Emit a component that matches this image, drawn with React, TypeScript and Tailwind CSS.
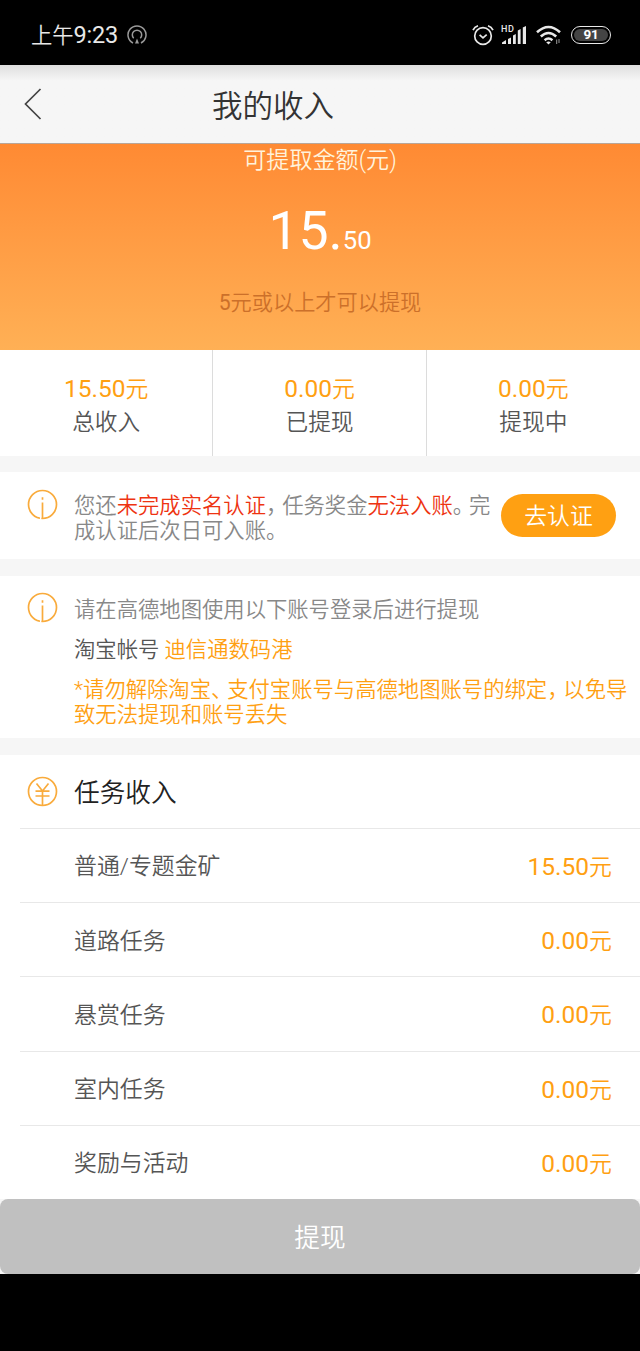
import type { ReactNode } from "react";

const stats = [
  { label: "总收入", value: "15.50" },
  { label: "已提现", value: "0.00" },
  { label: "提现中", value: "0.00" },
];

const incomes = [
  { label: "普通/专题金矿", value: "15.50" },
  { label: "道路任务", value: "0.00" },
  { label: "悬赏任务", value: "0.00" },
  { label: "室内任务", value: "0.00" },
  { label: "奖励与活动", value: "0.00" },
];

export default function App() {
  return (
    <div className="w-[640px] h-[1351px] bg-black flex flex-col overflow-hidden font-[Roboto,'Noto_Sans_CJK_SC',sans-serif] font-[350]">
      <StatusBar />
      <main className="h-[1209px] bg-[#f6f6f6] flex flex-col shrink-0">
        <header className="h-[79px] shrink-0 flex items-center border-b border-[#b9a698] bg-linear-to-b from-[#dedede] via-[#f6f6f6] via-20% to-[#f6f6f6]">
          <button type="button" className="w-[212px] pl-6">
            <svg width="18" height="32" viewBox="0 0 18 32" fill="none" stroke="#444" strokeWidth="1.7">
              <path d="M16.5 1 1.5 16l15 15" />
            </svg>
          </button>
          <h1 className="pt-1.5 text-[30.5px] leading-10 text-[#333] whitespace-nowrap">我的收入</h1>
        </header>

        <Balance />

        <section className="h-[106px] shrink-0 grid grid-cols-3 bg-white divide-x divide-[#dcdcdc]">
          {stats.map((s) => (
            <div key={s.label} className="pt-[23px] text-center">
              <Money value={s.value} />
              <p className="pt-px text-[22.7px] leading-8 text-[#555]">{s.label}</p>
            </div>
          ))}
        </section>

        <section className="h-[87px] mt-4 shrink-0 bg-white flex pl-[27px] pt-[17px]">
          <InfoIcon />
          <p className="ml-4 pt-1 w-[424px] text-[21.33px] leading-[25px] text-[#888] whitespace-nowrap">
            您还<b className="font-[350] text-[#ee3311]">未完成实名认证</b>
            <Punct>，</Punct>任务奖金<b className="font-[350] text-[#ee3311]">无法入账</b>
            <Punct>。</Punct>完
            <br />
            成认证后次日可入账。
          </p>
          <button type="button" className="ml-[3px] mt-[5px] pt-1 w-[115px] h-[43px] rounded-full bg-[#ffa012] text-white text-[22.9px] leading-none">
            去认证
          </button>
        </section>

        <section className="h-[162px] mt-[17px] shrink-0 bg-white flex pl-[27px] pt-4">
          <InfoIcon />
          <div className="ml-4 text-[21.33px] leading-[25px] whitespace-nowrap">
            <p className="pt-[5px] text-[#888]">请在高德地图使用以下账号登录后进行提现</p>
            <p className="pt-[15px] text-[#555]">
              淘宝帐号 <span className="text-[#ffa012]">迪信通数码港</span>
            </p>
            <p className="pt-[15px] text-[#ffa012]">
              *请勿解除淘宝<Punct>、</Punct>支付宝账号与高德地图账号的绑定<Punct>，</Punct>以免导
              <br />
              致无法提现和账号丢失
            </p>
          </div>
        </section>

        <section className="mt-[17px] flex-1 bg-white">
          <div className="h-[73px] flex items-center pl-[27px]">
            <CircleIcon>
              <path d="M9.5 7.5 15.5 15l6-7.5M8.5 15.2h14M8.5 20h14M15.5 15v15" />
            </CircleIcon>
            <h2 className="ml-4 pt-1 text-[25.7px] text-[#222]">任务收入</h2>
          </div>
          {incomes.map((item) => (
            <div key={item.label} className="ml-5 h-[74.2px] border-t border-[#e8e8e8] flex items-center justify-between pl-[54px] pr-7 pt-1">
              <span className="text-[22.9px] text-[#555]">{item.label}</span>
              <Money value={item.value} />
            </div>
          ))}
        </section>

        <button type="button" className="h-[75px] pt-1 shrink-0 rounded-lg bg-[#c0c0c0] text-white text-[25.7px]">
          提现
        </button>
      </main>
    </div>
  );
}

function Balance() {
  return (
    <section className="h-[206px] shrink-0 bg-linear-to-b from-[#ff8a33] to-[#ffb055] text-center text-white">
      <p className="text-[23.1px] leading-[34px] text-[#fff3dc]">可提取金额(元)</p>
      <p className="mt-[19px] text-[53.6px] leading-[68px] font-normal">
        15.<span className="text-[25.7px]">50</span>
      </p>
      <p className="mt-3 text-[21.2px] leading-[34px] text-[#cc702a]">
        <span className="font-normal">5</span>元或以上才可以提现
      </p>
    </section>
  );
}

// full-width marks are set tighter than a whole em
function Punct({ children }: { children: string }) {
  return <span className="[font-feature-settings:'halt'] tracking-[5.5px]">{children}</span>;
}

function Money({ value }: { value: string }) {
  return (
    <p className="text-[24.5px] leading-8 text-[#ffa012]">
      <span className="font-normal">{value}</span>
      <span className="text-[22.9px]">元</span>
    </p>
  );
}

function CircleIcon({ children }: { children: ReactNode }) {
  return (
    <svg className="shrink-0" width="31" height="31" viewBox="0 0 31 31" fill="none" stroke="#f9ab3c" strokeWidth="1.7">
      <circle cx="15.5" cy="15.5" r="14" />
      {children}
    </svg>
  );
}

function InfoIcon() {
  return (
    <CircleIcon>
      <path d="M15.5 13.5V30M15.5 8.2v2.6" />
      <path d="M13.6 27.8v3" stroke="#fff" strokeWidth="1.4" />
    </CircleIcon>
  );
}

function StatusBar() {
  return (
    <div className="h-[65px] shrink-0 flex items-center justify-between pl-[31px] pr-[29px] pt-1 text-[#e8e8e8]">
      <div className="flex items-center gap-[9px]">
        <span className="pt-0.5 text-[23.5px] leading-8">
          <span className="text-[21.3px]">上午</span>
          <span className="font-normal tracking-[-0.2px]">9:23</span>
        </span>
        <svg width="20" height="20" viewBox="0 0 20 20" fill="none" stroke="#999" strokeWidth="1.5">
          <path d="M6 18a9 9 0 1 1 8 0" />
          <path d="M6.7 13.2a4.7 4.7 0 1 1 6.6 0" />
          <path d="M10 13.5 8 18.5h4z" fill="#999" stroke="none" />
        </svg>
      </div>
      <div className="flex items-center">
        <svg className="mr-px" width="22" height="22" viewBox="0 0 22 22" fill="none" stroke="currentColor" strokeWidth="1.7">
          <circle cx="11" cy="12" r="8.3" />
          <path d="M1 6.2Q2.5 3 6 1.8M21 6.2Q19.5 3 16 1.8M7.6 10.8l3.4 3.1 3.7-3.3" />
        </svg>
        <svg className="ml-1.5" width="26" height="20" viewBox="0 0 26 20" fill="currentColor">
          <text x="0" y="7" fontSize="9" fontWeight="500" fontFamily="Roboto, sans-serif" letterSpacing=".6">HD</text>
          <path d="M1 19v-1.5L5 15v4zM7 19v-5l3-1.5V19zM12 19v-8.5l2.8-1.5v10zM16.8 19V5.5L19.6 4v15zM21.8 19V2.5L25 1v18z" />
        </svg>
        <svg className="ml-[9px]" width="26" height="20" viewBox="0 0 26 20" fill="none" stroke="currentColor" strokeWidth="2.6">
          <path d="M1 7.3Q12.5-3.3 24 7.3M4.8 11.5q7.7-7 15.4 0M8.6 15.2q3.9-3.4 7.8 0" />
          <path d="M10.2 17.3q2.3-1.5 4.6 0L12.5 19.5z" fill="currentColor" stroke="none" />
          <path d="M20.7 14.5v4.5M23 14v4" strokeWidth="1" stroke="#999" />
        </svg>
        <div className="ml-[9px] w-10 h-[18px] rounded-full border-[1.5px] border-current p-0.5">
          <div className="h-full rounded-full bg-[#444] flex items-center justify-center text-[13.5px] font-bold leading-none tracking-tight text-white">91</div>
        </div>
      </div>
    </div>
  );
}
